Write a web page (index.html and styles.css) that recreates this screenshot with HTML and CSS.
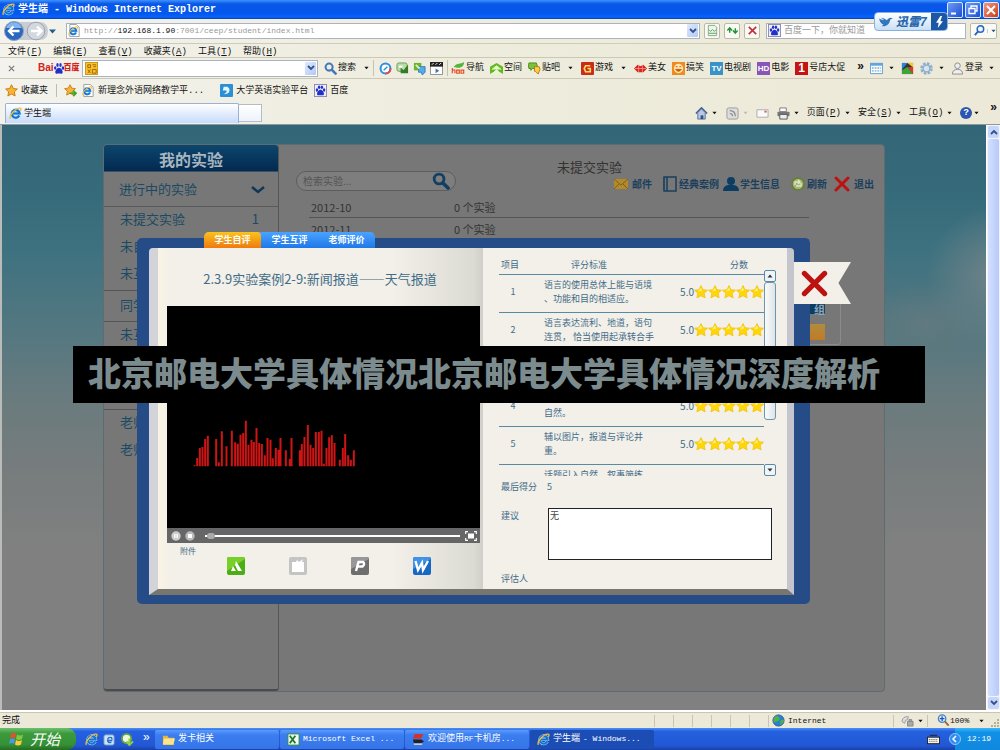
FILE: index.html
```html
<!DOCTYPE html>
<html lang="zh-CN">
<head>
<meta charset="utf-8">
<title>学生端</title>
<link rel="stylesheet" href="styles.css">
</head>
<body>
<svg class="defs" aria-hidden="true">
  <symbol id="ie" viewBox="0 0 14 14"><path d="M11 9.200A4.200 4.200 0 1 1 11.400 7H4.400" fill="none" stroke="#9fd2ff" stroke-width="3.400"/><path d="M11 9.200A4.200 4.200 0 1 1 11.400 7H4.400" fill="none" stroke="#1873cc" stroke-width="2.300"/><path d="M1.600 12.600C-.6 10 6.600 1.400 11.500 1.200c2-.1 1.500 1.700.7 3" fill="none" stroke="#f0bf3c" stroke-width="1.500"/></symbol>
  <symbol id="iepage" viewBox="0 0 14 14"><path d="M2 .5h7l3 3v10H2z" fill="#fff" stroke="#9a9a9a"/><use href="#ie" x="0" y="2" width="11" height="11"/></symbol>
  <symbol id="paw" viewBox="0 0 14 14"><rect x=".5" y=".5" width="13" height="13" fill="#eef" stroke="#88a"/><g fill="#2230c8"><ellipse cx="3.200" cy="6.500" rx="1.300" ry="1.800"/><ellipse cx="5.500" cy="3.500" rx="1.300" ry="1.900"/><ellipse cx="8.500" cy="3.500" rx="1.300" ry="1.900"/><ellipse cx="10.900" cy="6.500" rx="1.300" ry="1.800"/><path d="M7 6.300c2 0 4 3 3.700 4.700-.4 1.800-2 1-3.700 1s-3.300.8-3.700-1C3 9.300 5 6.300 7 6.300z"/></g></symbol>
  <symbol id="star" viewBox="0 0 14 14"><path d="M7 .6l2 4.100 4.500.5-3.300 3.100.9 4.600L7 10.700l-4.100 2.200.9-4.600L.5 5.200 5 4.700z" fill="#ffd60a" stroke="#f4be00" stroke-width=".7" stroke-linejoin="round"/><path d="M7 2.500l1 3-4 1z" fill="#fff27a"/></symbol>
  <symbol id="fav" viewBox="0 0 14 14"><path d="M7 .8l2 4 4.300.6-3.200 3 .8 4.500L7 10.800l-3.900 2.100.8-4.500-3.200-3L5 4.800z" fill="#f9b233" stroke="#c77a10"/></symbol>
  <symbol id="down" viewBox="0 0 6 4"><path d="M.5.500h5L3 3.500z" fill="currentColor"/></symbol>
  <symbol id="chev" viewBox="0 0 8 6"><path d="M1 1l3 3 3-3" fill="none" stroke="#31508c" stroke-width="1.800"/></symbol>
  <symbol id="lens" viewBox="0 0 14 14"><circle cx="5.500" cy="5.500" r="3.800" fill="none" stroke="currentColor" stroke-width="2.200"/><path d="M8.500 8.500l4 4" stroke="currentColor" stroke-width="2.800" stroke-linecap="round"/></symbol>
  <symbol id="cross" viewBox="0 0 24 24"><path d="M3 3l18 18M21 3L3 21" stroke="#bd1212" stroke-width="4.500" stroke-linecap="round"/></symbol>
</svg>

<header class="chrome">
  <div class="titlebar">
    <svg class="i12"><use href="#ie"/></svg>
    <h1 class="wintitle">学生端 <span class="latin">- Windows Internet Explorer</span></h1>
    <div class="winbtns">
      <button class="wb" aria-label="最小化"><svg viewBox="0 0 14 14"><path d="M3 10.500h5" stroke="#fff" stroke-width="2"/></svg></button>
      <button class="wb" aria-label="还原"><svg viewBox="0 0 14 14"><path d="M5 5V3h6v5H9M3 5.500h6v5H3z" fill="none" stroke="#fff" stroke-width="1.300"/></svg></button>
      <button class="wb wb-close" aria-label="关闭"><svg viewBox="0 0 14 14"><path d="M3 3l8 8M11 3l-8 8" stroke="#fff" stroke-width="2"/></svg></button>
    </div>
  </div>

  <div class="addressbar">
    <svg class="navbtns" viewBox="0 0 58 22">
      <path d="M12 2h24q9 0 9 9t-9 9H12z" fill="#c9cdd3"/>
      <circle cx="11" cy="11" r="9.500" fill="#2a68c0" stroke="#8fa3bd"/><path d="M3 8a8.500 8.500 0 0 1 16 0z" fill="#86b4ec"/>
      <path d="M16.500 11H6M10.500 6.500L6 11l4.500 4.500" fill="none" stroke="#fff" stroke-width="2.400"/>
      <circle cx="33" cy="11" r="8.800" fill="#d3d8de" stroke="#9aa5b1"/>
      <path d="M28 11h10M34 6.500L38.500 11 34 15.500" fill="none" stroke="#fff" stroke-width="2.400"/>
      <path d="M46 9.500h7L49.500 13.500z" fill="#1d5f8c"/>
    </svg>
    <div class="urlbox">
      <svg class="i12"><use href="#iepage"/></svg>
      <span class="url">http://<b>192.168.1.90</b>:7001/ceep/student/index.html</span>
      <button class="drop" aria-label="地址列表"><svg><use href="#chev"/></svg></button>
    </div>
    <button class="sq" aria-label="兼容性视图"><svg viewBox="0 0 14 14"><path d="M2.500 1.500h7l2 2v9h-9z" fill="#edf6e9" stroke="#84a884"/><path d="M3 6l2 2 2-2 2 2 2-2M3 10h8" fill="none" stroke="#5a9e62"/></svg></button>
    <button class="sq" aria-label="刷新"><svg viewBox="0 0 14 14"><path d="M4 9.500V5M1.500 7L4 4l2.500 3M10 4.500V9M7.500 7L10 10l2.500-3" fill="none" stroke="#219436" stroke-width="1.500"/></svg></button>
    <button class="sq" aria-label="停止"><svg viewBox="0 0 14 14"><path d="M3 3l8 8M11 3l-8 8" stroke="#c5303a" stroke-width="1.800"/></svg></button>
    <div class="findbox"><svg class="i12"><use href="#paw"/></svg><input class="find" aria-label="搜索" placeholder="百度一下，你就知道"></div>
    <button class="sq sq-find" aria-label="搜索"><svg viewBox="0 0 14 14"><circle cx="8" cy="5.500" r="3.500" fill="#eaf3ff" stroke="#2763bd" stroke-width="1.600"/><path d="M5.500 8L2 12" stroke="#2763bd" stroke-width="2"/></svg><svg class="car"><use href="#down"/></svg></button>
  </div>

  <nav class="menubar">
    <a href="#">文件(<u>F</u>)</a><a href="#">编辑(<u>E</u>)</a><a href="#">查看(<u>V</u>)</a><a href="#">收藏夹(<u>A</u>)</a><a href="#">工具(<u>T</u>)</a><a href="#">帮助(<u>H</u>)</a>
  </nav>

  <div class="baidubar">
    <svg class="bx" viewBox="0 0 8 8"><path d="M1 1l6 6M7 1L1 7" stroke="#777" stroke-width="1.300"/></svg>
    <div class="logo"><b>Bai</b><svg viewBox="2 1 10 12"><g fill="#2230c8"><ellipse cx="3.200" cy="6.500" rx="1.200" ry="1.800"/><ellipse cx="5.500" cy="3.500" rx="1.200" ry="1.900"/><ellipse cx="8.500" cy="3.500" rx="1.200" ry="1.900"/><ellipse cx="10.900" cy="6.500" rx="1.200" ry="1.800"/><path d="M7 6.300c2 0 4 3 3.700 4.700-.4 1.800-2 1-3.700 1s-3.300.8-3.700-1C3 9.300 5 6.300 7 6.300z"/></g></svg><b class="zh">百度</b></div>
    <div class="bbox">
      <svg class="i12" viewBox="0 0 14 14"><rect x=".5" y=".5" width="13" height="13" fill="#f7c428" stroke="#c99512"/><path d="M3 3h3v3H3zM8 3h4M9 5h3M3 8l3 4M6 8l-3 4M8 8h4v4H8z" fill="none" stroke="#a05e08"/></svg>
      <input class="bfind" aria-label="百度搜索">
      <button class="drop" aria-label="搜索记录"><svg><use href="#chev"/></svg></button>
    </div>
    <a class="tool t-search" href="#"><svg class="lens"><use href="#lens"/></svg>搜索</a>
    <svg class="car"><use href="#down"/></svg>
    <div class="group">
      <svg class="i12" viewBox="0 0 14 14"><circle cx="7" cy="7" r="5.300" fill="#fff" stroke="#2c8fe0" stroke-width="2.200"/><path d="M7 12.300A5.300 5.300 0 0 0 12.300 7" fill="none" stroke="#e84b3c" stroke-width="2.200"/><path d="M5 9l4-4" stroke="#2c8fe0" stroke-width="1.500"/></svg>
      <svg class="i12" viewBox="0 0 14 14"><rect x="1" y="1" width="11" height="9" rx="2" fill="#b9dca6" stroke="#6b9a52"/><path d="M5 6l3 3 5-6v9H5z" fill="#317c28"/><path d="M3 5h4" stroke="#fff" stroke-width="2"/></svg>
      <svg class="i12" viewBox="0 0 14 14"><path d="M1 1h8v8H1z" fill="#68b52f"/><path d="M6 5h7v6l-3 3-1-3H6z" fill="#5aaae8" stroke="#2f7cc0"/><path d="M3 3l4 4" stroke="#d7f2bd" stroke-width="2"/></svg>
      <svg class="i12" viewBox="0 0 14 14"><path d="M.5.500h13v13H.5z" fill="#fff" stroke="#888"/><path d="M0 0h14v5H0z" fill="#222"/><path d="M2 3l2-2M6 3l2-2M10 3l2-2" stroke="#fff"/><path d="M6 7l4 2.500L6 12z" fill="#4573b8"/></svg>
    </div>
    <div class="group links">
      <a class="tool" href="#"><svg class="i16" viewBox="0 0 16 16"><path d="M3 7C7 1 11 4 15 1c0 5-4 8-10 6z" fill="#53b53a"/><path d="M1.500 8v6M1.500 11q3-2 3 0v3M6.500 10.500h3v3.500h-3zM11.500 10.500h3v3.500h-3z" fill="none" stroke="#e4512a" stroke-width="1.400"/></svg>导航</a>
      <a class="tool" href="#"><svg class="i12" viewBox="0 0 14 14"><path d="M0 5l7-4 7 4v8l-3-2H3l-3 2z" fill="#63b91d"/><path d="M2 8l5-4 5 4M4 11l3-3 3 3v2H4z" fill="#e6f8cf" stroke="#e6f8cf"/></svg>空间</a>
      <a class="tool" href="#"><svg class="i12" viewBox="0 0 14 14"><path d="M1 1h8q2 3 0 6H5L3 9V7H1q-1-3 0-6z" fill="#7cc13b" stroke="#458c17"/><path d="M7 5h5q2 3 0 5l-1 3-3-3H7z" fill="#fbcf49" stroke="#b77812"/></svg>贴吧</a>
      <svg class="car"><use href="#down"/></svg>
      <a class="tool" href="#"><svg class="i12" viewBox="0 0 14 14"><rect width="14" height="14" rx="1" fill="#c92c17"/><path d="M10 4H5L3.500 7 5 10.500h5V7H7" fill="none" stroke="#ffdc66" stroke-width="1.800"/></svg>游戏</a>
      <svg class="car"><use href="#down"/></svg>
      <a class="tool" href="#"><svg class="i12" viewBox="0 0 14 14"><path d="M0 7l4-4 3 1.500L10 3l4 4-4 4H4z" fill="#d8201c"/><path d="M1 7h12M5 3v8M9 3v8" stroke="#f3a49c" stroke-width=".8"/></svg>美女</a>
      <a class="tool" href="#"><svg class="i12" viewBox="0 0 14 14"><rect width="14" height="14" fill="#f08a1e"/><circle cx="7" cy="7" r="5" fill="#ffe6b0"/><path d="M4 5h2M8 5h2M4 8q3 4 6 0z" fill="#c95b00" stroke="#c95b00"/></svg>搞笑</a>
      <a class="tool" href="#"><span class="badge tv">TV</span>电视剧</a>
      <a class="tool" href="#"><span class="badge hd">HD</span>电影</a>
      <a class="tool" href="#"><span class="badge one">1</span>号店大促</a>
    </div>
    <div class="bright">
      <span class="more">»</span>
      <svg class="i12" viewBox="0 0 14 14"><path d="M.5 1.500h13v11H.5z" fill="#fff" stroke="#5d9bcf"/><path d="M0 1h14v3H0z" fill="#62a5dc"/><path d="M2 6.500h10M2 9.500h10" stroke="#9cc4e4" stroke-width="2" stroke-dasharray="2 1"/></svg>
      <svg class="car"><use href="#down"/></svg>
      <svg class="i12" viewBox="0 0 14 14"><path d="M1 1h12v12H1z" fill="#333"/><path d="M1 1h6l-6 7z" fill="#2e85d8"/><path d="M7 1h6v5z" fill="#f3cc24"/><path d="M1 9l6-4 6 8H1z" fill="#3ba53b"/><path d="M7 6l6-1v8z" fill="#d63b28"/></svg>
      <svg class="i12" viewBox="0 0 14 14"><circle cx="7" cy="7" r="5" fill="none" stroke="#8fb0cc" stroke-width="3.500" stroke-dasharray="2.600 1.300"/><circle cx="7" cy="7" r="3.600" fill="#d5e4f0" stroke="#8fb0cc" stroke-width="1.500"/></svg>
      <svg class="car"><use href="#down"/></svg>
      <a class="tool" href="#"><svg class="i12" viewBox="0 0 14 14"><circle cx="7" cy="4" r="3" fill="#eee" stroke="#8a8a8a"/><path d="M1.500 13q0-5 5.500-5t5.500 5z" fill="#eee" stroke="#8a8a8a"/></svg>登录</a>
      <svg class="car"><use href="#down"/></svg>
    </div>
  </div>

  <div class="favbar">
    <a class="tool" href="#"><svg class="i12"><use href="#fav"/></svg>收藏夹</a>
    <a class="tool favadd" href="#" aria-label="添加"><svg class="i12" viewBox="0 0 14 14"><use href="#fav" width="13" height="13"/><path d="M6 10h7M10 7l3 3-3 3" fill="none" stroke="#3da52c" stroke-width="1.800"/></svg></a>
    <a class="tool" href="#"><svg class="i12"><use href="#iepage"/></svg>新理念外语网络教学平...</a>
    <a class="tool f3" href="#"><svg class="i12" viewBox="0 0 14 14"><rect width="14" height="14" rx="1" fill="#2b8fd6"/><path d="M4 3h4q3 2 2 5t-6 3q4-2 3-4H3" fill="#e4f5ff"/></svg>大学英语实验平台</a>
    <a class="tool" href="#"><svg class="i12"><use href="#paw"/></svg>百度</a>
  </div>

  <div class="tabbar">
    <button class="tab"><svg class="i12"><use href="#ie"/></svg>学生端</button>
    <button class="newtab" aria-label="新选项卡"></button>
    <div class="cmds">
      <svg class="i12" viewBox="0 0 14 14"><path d="M1 7l6-6 6 6" fill="none" stroke="#3c5c93" stroke-width="1.800"/><path d="M3 6l4-4 4 4v7H3z" fill="#b9c9e4" stroke="#5a6f96"/><path d="M6 9h3v4H6z" fill="#31508c"/></svg><svg class="car"><use href="#down"/></svg>
      <svg class="i12 rss" viewBox="0 0 14 14"><rect x="1" y="1" width="12" height="12" rx="2" fill="#ddd" stroke="#999"/><path d="M4 4q6 0 6 6M4 7q3 0 3 3" fill="none" stroke="#888" stroke-width="1.300"/></svg><svg class="car off"><use href="#down"/></svg>
      <svg class="i12" viewBox="0 0 14 14"><path d="M1 3h12v8H1z" fill="#fafafa" stroke="#aaa"/><path d="M9 4h2.500v2H9z" fill="#c66"/></svg>
      <svg class="i12 prn" viewBox="0 0 14 14"><path d="M3 1h7v4H3z" fill="#fff" stroke="#777"/><rect x=".5" y="5" width="13" height="5" rx="1" fill="#777"/><path d="M3 8h8v5H3z" fill="#eee" stroke="#555"/></svg><svg class="car"><use href="#down"/></svg>
      <a href="#">页面(<u>P</u>)</a><svg class="car"><use href="#down"/></svg>
      <a href="#">安全(<u>S</u>)</a><svg class="car"><use href="#down"/></svg>
      <a href="#">工具(<u>O</u>)</a><svg class="car"><use href="#down"/></svg>
      <span class="help">?</span><svg class="car"><use href="#down"/></svg>
      <span class="more up">»</span>
    </div>
  </div>
  <div class="thunder"><svg viewBox="0 0 16 14"><path d="M0 3q3 2 6 2l-4-3q4 0 7 3 1-2 4-3 1 0 3 1l-3 1q-1 7-7 8H3l2-2q-4-1-5-7z" fill="#3276c0"/></svg><b>迅雷7</b><span><svg viewBox="0 0 10 14"><path d="M6 0L1 8h3l-1 6 6-8H6l2-6z" fill="#fff"/></svg></span></div>
</header>

<main class="viewport">
  <div class="page">
    <div class="panel">
      <aside class="side">
        <h2>我的实验</h2>
        <div class="cat">进行中的实验<svg viewBox="0 0 14 9"><path d="M1 2l6 5 6-5" fill="none" stroke="#0e3656" stroke-width="2.400"/></svg></div>
        <ul>
          <li>未提交实验<span>1</span></li><li>未自</li><li>未互</li>
          <li class="head">同学</li>
          <li>未互</li><li></li>
          <li class="tail"></li><li>老师</li><li>老师</li>
        </ul>
      </aside>
      <section class="body">
        <div class="top">
          <form class="search"><input aria-label="检索实验" placeholder="检索实验..."><button type="button" aria-label="检索"><svg><use href="#lens"/></svg></button></form>
          <div class="right">
            <h3>未提交实验</h3>
            <nav class="acts">
              <a href="#" class="mail"><svg class="i16" viewBox="0 0 16 16"><path d="M1 3h14v10H1z" fill="#b28a2c"/><path d="M1 3l7 6 7-6M1 13l5-5M15 13l-5-5" fill="none" stroke="#806018"/></svg>邮件</a>
              <a href="#"><svg class="i16" viewBox="0 0 16 16"><path d="M2 1h12v14H2zM5 1v14" fill="none" stroke="#183f5e" stroke-width="1.500"/><path d="M1 3h2M1 6h2M1 9h2M1 12h2" stroke="#183f5e"/></svg>经典案例</a>
              <a href="#"><svg class="i16" viewBox="0 0 16 16"><circle cx="8" cy="5" r="4" fill="#0c3d63"/><path d="M0 15q0-5 5-6h6q5 1 5 6z" fill="#0c3d63"/></svg>学生信息</a>
              <a href="#" class="re"><svg class="i16" viewBox="0 0 16 16"><circle cx="8" cy="8" r="6" fill="#a5b27a" stroke="#63802c" stroke-width="1.500"/><path d="M5 9V6h5M11 7v3H6M8 4l2 2-2 2" fill="none" stroke="#dde6c5" stroke-width="1.400"/></svg>刷新</a>
              <a href="#" class="exit"><svg class="i16"><use href="#cross"/></svg>退出</a>
            </nav>
          </div>
        </div>
        <ul class="months"><li><span>2012-10</span>0 个实验</li><li><span>2012-11</span>0 个实验</li></ul>
      </section>
      <div class="mini"><b>组</b><i></i></div>
    </div>

    <section class="modal">
      <nav class="mtabs"><button class="on">学生自评</button><button>学生互评</button><button>老师评价</button></nav>
      <div class="book">
        <div class="left">
          <h2>2.3.9实验案例2-9:新闻报道——天气报道</h2>
          <div class="video">
            <svg class="wave" viewBox="231 60 936 330"><path stroke="#d01414" stroke-width="6" d="M312 205v-3M320 205v-25M328 205v-55M336 205v-58M344 205v-82M352 205v-92M377 205v-82M385 205v-12M394 205v-105M408 205v-60M424 205v-107M434 205v-72M442 205v-68M450 205v-95M458 205v-100M466 205v-137M474 205v-65M483 205v-80M490 205v-73M498 205v-115M506 205v-70M514 205v-67M523 205v-33M531 205v-85M540 205v-80M547 205v-24M556 205v-55M564 205v-50M570 205v-85M586 205v-48M598 205v-22M603 205v-85M628 205v-48M634 205v-67M642 205v-88M652 205v-124M660 205v-65M668 205v-55M676 205v-103M685 205v-103M693 205v-107M700 205v-8M708 205v-55M716 205v-87M724 205v-93M732 205v-70M748 205v-20M757 205v-55M764 205v-97M773 205v-33M781 205v-20M790 205v-48"/></svg>
            <div class="ctl">
              <button aria-label="暂停"><svg viewBox="0 0 10 10"><circle cx="5" cy="5" r="4.700" fill="#ccc"/><path d="M3.800 3v4M6.200 3v4" stroke="#fff" stroke-width="1.400"/></svg></button>
              <button aria-label="停止"><svg viewBox="0 0 10 10"><circle cx="5" cy="5" r="4.700" fill="#bbb"/><path d="M3 3h4v4H3z" fill="#fff"/></svg></button>
              <div class="track"><i></i></div>
              <button class="full" aria-label="全屏"><svg viewBox="0 0 12 10"><path d="M.7 3V.7H3M9 .7h2.300V3M11.300 7v2.300H9M3 9.300H.7V7" fill="none" stroke="#fff" stroke-width="1.200"/><path d="M3 2.500h6v5H3z" fill="#fff"/></svg></button>
            </div>
          </div>
          <p class="att">附件</p>
          <div class="files">
            <svg viewBox="0 0 18 18"><rect width="18" height="18" rx="2" fill="#4cae14"/><path d="M0 2q0-2 2-2h14q2 0 2 2L0 14z" fill="#79cf2a"/><path d="M9 4l6 10H11L8 8zM6 9l3 5H4z" fill="#fff"/></svg>
            <svg viewBox="0 0 18 18"><rect width="18" height="18" rx="2" fill="#c4c4c4"/><path d="M3 5h4l1-2 2 2 4-3-1 3h2v10H3z" fill="#fff"/></svg>
            <svg viewBox="0 0 18 18"><rect width="18" height="18" rx="2" fill="#6e6e6e"/><path d="M0 2q0-2 2-2h14q2 0 2 2L0 12z" fill="#979797"/><path d="M5 14L7.500 5h4.500q2.500 2-.5 4.500H7" fill="none" stroke="#fff" stroke-width="2.400"/></svg>
            <svg viewBox="0 0 18 18"><rect width="18" height="18" rx="2" fill="#1767c4"/><path d="M0 2q0-2 2-2h14q2 0 2 2L0 12z" fill="#3f92e6"/><path d="M2.500 4L5 13l4-7 1 7 5-9" fill="none" stroke="#fff" stroke-width="2.400"/></svg>
          </div>
        </div>
        <div class="rightp">
          <div class="scores">
            <div class="clip">
            <table>
              <thead><tr><th class="c1">项目</th><th class="c2">评分标准</th><th class="c3">分数</th></tr></thead>
              <tbody>
                <tr><td class="c1">1</td><td class="c2">语言的使用总体上能与语境<br>、功能和目的相适应。</td><td class="c3"><div>5.0 <svg><use href="#star"/></svg><svg><use href="#star"/></svg><svg><use href="#star"/></svg><svg><use href="#star"/></svg><svg><use href="#star"/></svg></div></td></tr>
                <tr><td class="c1">2</td><td class="c2">语言表达流利、地道，语句<br>连贯， 恰当使用起承转合手</td><td class="c3"><div>5.0 <svg><use href="#star"/></svg><svg><use href="#star"/></svg><svg><use href="#star"/></svg><svg><use href="#star"/></svg><svg><use href="#star"/></svg></div></td></tr>
                <tr><td class="c1"></td><td class="c2"></td><td class="c3"></td></tr>
                <tr><td class="c1">4</td><td class="c2">&nbsp;<br>自然。</td><td class="c3"><div>5.0 <svg><use href="#star"/></svg><svg><use href="#star"/></svg><svg><use href="#star"/></svg><svg><use href="#star"/></svg><svg><use href="#star"/></svg></div></td></tr>
                <tr><td class="c1">5</td><td class="c2">辅以图片，报道与评论并<br>重。</td><td class="c3"><div>5.0 <svg><use href="#star"/></svg><svg><use href="#star"/></svg><svg><use href="#star"/></svg><svg><use href="#star"/></svg><svg><use href="#star"/></svg></div></td></tr>
                <tr><td class="c1"></td><td class="c2">话题引入自然，叙事简练<br>&nbsp;</td><td class="c3"></td></tr>
              </tbody>
            </table>
            </div>
            <div class="sbar"><button aria-label="向上"><svg class="flip"><use href="#down"/></svg></button><i></i><button class="dn" aria-label="向下"><svg><use href="#down"/></svg></button></div>
          </div>
          <p class="final">最后得分 <span>5</span></p>
          <div class="advice"><label for="adv">建议</label><textarea id="adv">无</textarea></div>
          <p class="by">评估人</p>
        </div>
      </div>
      <button class="flag" aria-label="关闭"><svg><use href="#cross"/></svg></button>
    </section>
    <div class="banner">北京邮电大学具体情况北京邮电大学具体情况深度解析</div>
  </div>
  <div class="vscroll"><button aria-label="向上滚动"><svg class="flip"><use href="#chev"/></svg></button><i></i><button aria-label="向下滚动"><svg><use href="#chev"/></svg></button></div>
</main>

<footer>
  <div class="status">
    <span class="done">完成</span>
    <i></i><i></i><i></i><i></i><i></i><i></i>
    <div class="zone"><svg class="i12" viewBox="0 0 14 14"><circle cx="7" cy="7" r="6" fill="#2a7fd0" stroke="#2a5a90"/><path d="M3 3q4-2 5 1T5 8 3 11Q0 7 3 3zM9 7l4-1q0 4-4 6z" fill="#4fb24a"/></svg>Internet</div>
    <div class="prot"><svg class="i12" viewBox="0 0 14 14"><path d="M1 8q1-6 7-5l-1 3q-3 0-3 4z" fill="#ddd" stroke="#999"/><path d="M7 8h6v5H7zM8.500 8V6h3v2" fill="#aaa" stroke="#888"/></svg><svg class="car"><use href="#down"/></svg></div>
    <div class="zoom"><svg class="i12" viewBox="0 0 14 14"><circle cx="5.500" cy="5" r="4" fill="#d9ebff" stroke="#4a7fc4" stroke-width="1.400"/><path d="M3 5h5M5.500 2.500v5" stroke="#2058b0" stroke-width="1.400"/><path d="M8.500 8l4 4.500" stroke="#9a6a30" stroke-width="2"/></svg>100%<svg class="car"><use href="#down"/></svg></div>
    <svg class="grip" viewBox="0 0 9 9"><path d="M7 1h2M4 4h2M7 4h2M1 7h2M4 7h2M7 7h2" stroke="#b5b09a" stroke-width="2"/></svg>
  </div>
  <div class="taskbar">
    <button class="start"><svg viewBox="0 0 16 14"><path d="M2 2q3-2 5 0L6 6.500q-2-2-5 0z" fill="#e8502c"/><path d="M8 2.500q3 2 6 0L13 7q-3 2-6 0z" fill="#83c640"/><path d="M1 7.500q3-2 5 0L5 12q-2-2-5 0z" fill="#4c94ee"/><path d="M7 8q3 2 6 0l-1 4.500q-3 2-6 0z" fill="#f9cc3a"/></svg>开始</button>
    <div class="quick">
      <svg class="i12"><use href="#ie"/></svg>
      <svg class="i12" viewBox="0 0 14 14"><rect x="1" y="2" width="11" height="11" rx="2" fill="#cfe3f8" stroke="#6b93c4"/><path d="M10 8H5q0 3 4 2M5 7q1-3 4-2l1 2" fill="none" stroke="#256fc4" stroke-width="1.500"/></svg>
      <svg class="i12" viewBox="0 0 14 14"><circle cx="6" cy="6" r="5" fill="#eef6dd" stroke="#5fa43c" stroke-width="2"/><path d="M9 6v6M6 9l3 4 4-4" fill="none" stroke="#8ed048" stroke-width="2"/></svg>
      <span>»</span>
    </div>
    <button class="task"><svg class="i12" viewBox="0 0 14 14"><path d="M1 3h5l1 2h6v8H1z" fill="#e8b53a"/><path d="M2 6h12l-2 6.500H1z" fill="#ffe48a"/></svg>发卡相关</button>
    <button class="task"><svg class="i12" viewBox="0 0 14 14"><path d="M1 1h12v12H1z" fill="#f2fbf2" stroke="#2e8a3c"/><path d="M3 3l6 8M9 3l-6 8" stroke="#1e7a30" stroke-width="2"/></svg><span class="m">Microsoft Excel ...</span></button>
    <button class="task"><svg class="i12" viewBox="0 0 14 14"><path d="M3 1h9l-2 5H1z" fill="#d4332a"/><path d="M1 7h9l3 2-3 2H2z" fill="#222"/><path d="M2 12h9" stroke="#ddd" stroke-width="1.500"/></svg><span>欢迎使用<span class="m">RF</span>卡机房<span class="m">...</span></span></button>
    <button class="task cur"><svg class="i12"><use href="#ie"/></svg>学生端<span class="m">- Windows...</span></button>
    <svg class="kbd i12" viewBox="0 0 14 14"><rect x=".5" y="4.500" width="13" height="7" fill="#f5f2e4" stroke="#222"/><path d="M2 7h10M2 9h10" stroke="#555" stroke-dasharray="1 1"/><path d="M3 2.500h8" stroke="#222"/></svg>
    <div class="tray"><button aria-label="展开"><svg viewBox="0 0 8 8"><path d="M5 1L2 4l3 3" fill="none" stroke="#fff" stroke-width="1.500"/></svg></button><span class="m">12:19</span></div>
  </div>
</footer>
</body>
</html>
```
FILE: styles.css
```css
* { box-sizing: border-box; }
body { margin: 0; min-height: 100vh; display: flex; flex-direction: column; overflow: hidden; background: #eeecdc; color: #111; font: 9px/12px "Liberation Mono", "Noto Sans CJK SC", monospace; }
button { padding: 0; margin: 0; border: 0; background: none; color: inherit; font: inherit; display: flex; align-items: center; justify-content: center; }
input, textarea { font: inherit; border: 0; padding: 0; margin: 0; background: none; min-width: 0; outline: 0; }
a { color: inherit; text-decoration: none; }
h1, h2, h3, p, ul { margin: 0; padding: 0; font-weight: normal; list-style: none; }
svg { display: block; flex: none; }
i { display: block; }
.defs { position: absolute; width: 0; height: 0; }
.i12 { width: 13px; height: 13px; }
.i16 { width: 16px; height: 16px; }
.car { width: 5px; height: 4px; }
.off { color: #bbb; }
.m { font: 8px/12px "Liberation Mono", monospace; white-space: pre; }

/* Window frame */
.chrome { position: relative; background: linear-gradient(90deg, #f3f2ec, #eeecdc 50%, #ece9d8); }
.titlebar { height: 19px; display: flex; align-items: center; gap: 3px; padding: 0 1px 0 2px; color: #fff; background: linear-gradient(#3d93ff, #0a57e6 20%, #0457ee 70%, #0a63fb 90%, #0340b8); }
.wintitle { flex: 1; font-size: 10px; font-weight: bold; }
.latin { font-size: 10px; }
.winbtns { display: flex; gap: 2px; }
.wb { width: 16px; height: 16px; border: 1px solid #dce8ff; border-radius: 2px; background: linear-gradient(135deg, #6d9bf5, #1b4fd0); }
.wb-close { background: linear-gradient(135deg, #f19a80, #cc3a16); }
.wb svg { width: 14px; height: 14px; }
.addressbar { height: 25px; display: flex; align-items: center; gap: 4px; padding: 0 3px 1px 3px; border-bottom: 1px solid #cfcbb8; }
.navbtns { width: 58px; height: 22px; }
.urlbox, .findbox, .bbox { display: flex; align-items: center; border: 1px solid #aab3c2; background: #fff; height: 16px; }
.urlbox { flex: 1; gap: 3px; padding-left: 1px; margin-left: 1px; }
.url { flex: 1; font-size: 8px; color: #999; }
.url b { font-weight: normal; color: #111; }
.drop { width: 11px; height: 13px; margin-right: 1px; border-radius: 1px; background: linear-gradient(135deg, #dfe9ff, #b3c9f3); }
.drop svg { width: 8px; height: 6px; }
.sq { width: 16px; height: 16px; border: 1px solid #bbb9ab; border-radius: 2px; background: #fafaf5; }
.sq svg { width: 13px; height: 13px; }
.findbox { width: 200px; padding-left: 1px; gap: 3px; margin-left: 2px; }
.find { flex: 1; }
.find::placeholder { color: #999; opacity: 1; }
.sq-find { width: 27px; color: #31508c; }
.sq-find svg { width: 15px; }
.sq-find svg.car { width: 9px; height: 4px; padding-left: 3px; border-left: 1px solid #ccc; }
.menubar { height: 13px; display: flex; align-items: center; gap: 11px; padding-left: 8px; padding-top: 2px; }
.menubar a { white-space: nowrap; }
.baidubar { height: 22px; display: flex; align-items: center; padding: 0 5px 0 8px; border-top: 1px solid #cbc8b5; border-bottom: 1px solid #cbc8b5; white-space: nowrap; }
.bx { width: 7px; height: 7px; margin-right: 23px; }
.logo { display: flex; align-items: center; width: 42px; color: #d3241c; font: bold 10px/12px "Liberation Sans", "Noto Sans CJK SC", sans-serif; }
.logo svg { width: 10px; height: 13px; }
.logo .zh { font-size: 8px; font-weight: 900; }
.bbox { width: 236px; height: 17px; margin-left: 2px; padding-left: 2px; }
.bfind { flex: 1; }
.tool { display: flex; align-items: center; gap: 1px; }
.t-search { margin: 0 8px 0 6px; gap: 1px; }
.lens { width: 13px; height: 13px; color: #4478b8; }
.group { display: flex; gap: 4px; margin-left: 4px; padding-left: 5px; border-left: 1px solid #c5c2b2; height: 16px; align-items: center; }
.links { gap: 6px; padding-left: 3px; }
.links .i16 { width: 14px; }
.links .car { margin: 0 2px; }
.badge { width: 13px; height: 13px; color: #fff; font: bold 8px/13px "Liberation Sans", sans-serif; text-align: center; }
.tv { background: #3a93c8; }
.hd { background: #8955b8; }
.one { background: #c41414; font-size: 12px; }
.bright { margin-left: auto; display: flex; align-items: center; gap: 6px; }
.bright .car { margin-right: 1px; }
.more { font: bold 12px/12px "Liberation Sans", sans-serif; align-self: flex-start; }
.bright .more { line-height: 8px; }
.favbar { height: 23px; display: flex; align-items: center; padding-left: 5px; white-space: nowrap; }
.favbar .tool { gap: 3px; margin-right: 8px; }
.favbar .favadd { padding-left: 7px; border-left: 1px solid #bbb; margin-right: 5px; }
.favbar .f3 { margin-left: 8px; margin-right: 6px; }
.tabbar { height: 22px; display: flex; align-items: center; padding: 0 3px 0 5px; white-space: nowrap; }
.tab { width: 234px; height: 20px; justify-content: flex-start; gap: 2px; padding-left: 3px; border: 1px solid #9db0d0; border-bottom: 0; border-radius: 2px 2px 0 0; background: linear-gradient(#fff, #c7dbfb); }
.newtab { width: 23px; height: 18px; border: 1px solid #b4bccb; border-left: 0; background: linear-gradient(#fff, #eef3fb); }
.cmds { margin-left: auto; height: 20px; display: flex; align-items: center; gap: 2px; }
.cmds .car { margin: 0 6px 0 2px; }
.cmds .rss { margin-left: 1px; }
.cmds .prn { margin-left: 6px; }
.cmds .help + .car { margin-left: 0; margin-right: 9px; }
.help { width: 12px; height: 12px; border-radius: 50%; background: #2b57b0; color: #fff; font-weight: bold; text-align: center; }
.cmds .up { line-height: 8px; }
.thunder { position: absolute; right: 52px; top: 12px; width: 74px; height: 19px; display: flex; align-items: center; gap: 3px; padding-left: 4px; border: 1px solid #86b1df; border-radius: 4px; background: linear-gradient(#fff, #c9dff5); color: #2a68ad; font: bold 12px/16px "Liberation Sans", "Noto Sans CJK SC", sans-serif; overflow: hidden; white-space: nowrap; }
.thunder b { font-style: italic; font-size: 12px; }
.thunder > svg { width: 14px; height: 12px; }
.thunder span { margin-left: auto; width: 16px; align-self: stretch; display: flex; align-items: center; justify-content: center; background: #1b57a5; }
.thunder span svg { width: 9px; height: 12px; }

/* Web page */
.viewport { flex: 1; display: flex; border-top: 1px solid #8b9aa0; border-bottom: 2px solid #fff; min-height: 0; }
.page { position: relative; flex: 1; display: flex; padding: 19px 101px 18px 101px; border-left: 2px solid #b9bcb8; font-family: "Noto Sans CJK SC", sans-serif;
  background: radial-gradient(ellipse 70px 70px at 101% 26%, #6b8187 10%, transparent), radial-gradient(ellipse 70px 40px at 94% 34%, #61797f, transparent), linear-gradient(#336677, #366b7b 12%, #3f7280 22%, #557880 36%, #6a7b7e 47%, #767c7d 58%, #808080 72%); }
.panel { position: relative; flex: 1; display: flex; background: #777; border: 1px solid #5c6c70; border-radius: 4px; }
.side { width: 175px; border-right: 1px solid #555; border-bottom: 2px solid #4b4b4b; border-radius: 3px; color: #1b4a63; font-size: 13px; line-height: 18px; }
.side h2 { height: 27px; color: #a9b6c0; font-size: 16px; font-weight: bold; line-height: 29px; text-align: center; background: linear-gradient(#0c466d, #03294f); border-radius: 3px 3px 0 0; border-bottom: 1px solid #37506a; }
.cat { height: 35px; display: flex; align-items: center; justify-content: space-between; padding: 0 13px 0 15px; border-bottom: 1px solid #5a5a5a; }
.cat svg { width: 14px; height: 9px; }
.side li { height: 27px; display: flex; align-items: center; justify-content: space-between; padding: 0 19px 3px 16px; }
.side .head { height: 32px; margin-top: 2px; border-top: 1px solid #555; border-bottom: 1px solid #555; }
.side .tail { height: 34px; border-bottom: 1px solid #555; }
.body { flex: 1; color: #333; font-size: 11px; line-height: 16px; }
.top { display: flex; justify-content: space-between; align-items: flex-start; padding: 13px 10px 0 17px; }
.search { display: flex; align-items: center; width: 160px; height: 20px; margin-top: 13px; padding: 0 5px 0 6px; border: 1px solid #5d5d5d; border-radius: 10px; background: #7e7e7e; }
.search input { flex: 1; font-size: 10px; }
.search input::placeholder { color: #555; opacity: 1; }
.search svg { width: 18px; height: 18px; color: #123f62; }
.right h3 { font-size: 13px; line-height: 18px; width: 317px; }
.acts { display: flex; justify-content: flex-end; align-items: center; gap: 10px; color: #1b3f5c; font-size: 10px; font-weight: bold; }
.acts a { display: flex; align-items: center; gap: 1px; }
.acts .mail { gap: 3px; }
.acts a:nth-child(3) { margin-left: -6px; }
.acts .exit { gap: 4px; margin-left: -3px; }
.months { padding: 4px 75px 0 30px; }
.months li { display: flex; height: 22px; align-items: center; border-bottom: 1px solid #555; padding-left: 2px; }
.months span { width: 143px; }
.mini { position: absolute; right: 43px; top: 156px; width: 42px; height: 44px; border: 1px solid #8b8b8b; border-radius: 3px; padding: 2px 15px 0 0; text-align: right; }
.mini b { display: block; background: #0c3d63; color: #8fa4b5; font-size: 11px; line-height: 10px; }
.mini i { height: 16px; margin-top: 10px; background: linear-gradient(#b08c3c, #c07a28); }

/* Evaluation book */
.modal { position: absolute; left: 135px; top: 113px; width: 673px; height: 366px; padding: 10px 16px 9px 12px; background: #264c87; border-radius: 5px; color: #3f6d88; }
.mtabs { position: absolute; left: 67px; top: -6px; height: 16px; display: flex; border-radius: 5px 5px 0 0; overflow: hidden; background: linear-gradient(#4aa3ff, #1f78e8); color: #fff; font-weight: bold; }
.mtabs button { width: 57px; }
.mtabs .on { background: linear-gradient(#fbc31c, #ef7a10); border-radius: 0 4px 0 0; }
.book { height: 100%; display: flex; border-radius: 4px 4px 0 0; border-style: solid; border-width: 0 7px 6px 9px; border-color: #777 #c5c6cd #77776f #d3d4da; background: #f3efe9; }
.left { width: 325px; padding: 0 3px 0 9px; background: linear-gradient(90deg, #f8f4e4, #f3efe9 4%, #f3efe9 72%, #dbdbd3 97%, #cfcec8); }
.left h2 { padding-top: 20px; height: 58px; font-size: 13px; line-height: 22px; text-align: center; padding-right: 7px; }
.video { height: 237px; display: flex; flex-direction: column; background: #000; }
.wave { width: 100%; height: 110px; margin-top: 112px; }
.ctl { height: 15px; display: flex; align-items: center; gap: 4px; padding: 0 3px 0 4px; background: #666; }
.ctl button { width: 10px; height: 10px; }
.ctl .full { width: 12px; margin-left: 1px; }
.track { flex: 1; height: 2px; margin-left: 6px; background: #fff; display: flex; align-items: center; }
.track i { width: 8px; height: 6px; border-radius: 3px; margin-left: 2px; background: #aaa; flex: none; }
.att { padding: 2px 0 0 13px; font-size: 8px; }
.files { display: flex; gap: 44px; padding: 0 0 0 60px; }
.files svg { width: 18px; height: 18px; }
.rightp { flex: 1; padding: 6px 11px 0 16px; font-size: 9px; }
.scores { display: flex; height: 222px; }
.clip { flex: 1; overflow: hidden; }
table { width: 100%; border-collapse: collapse; table-layout: fixed; line-height: 14px; }
th { height: 20px; padding: 2px 0 0; font-weight: normal; border-bottom: 1px solid #5a8aa2; white-space: nowrap; }
td { height: 38px; padding: 0 0 3px; border-bottom: 1px solid #5a8aa2; }
th.c1 { text-align: left; padding-left: 2px; }
.c1 { width: 28px; text-align: center; }
.c2 { padding-left: 17px; text-align: left; white-space: nowrap; }
th.c2 { padding-left: 44px; }
.c3 { width: 86px; }
th.c3 { padding-left: 36px; }
.c3 div { display: flex; align-items: center; font-size: 10px; justify-content: flex-end; }
.c3 svg { width: 14px; height: 14px; }
.sbar { width: 12px; margin-top: 16px; display: flex; flex-direction: column; color: #333; }
.sbar button { width: 12px; height: 12px; border: 1px solid #5a8aa2; border-radius: 2px; background: #eef4f8; }
.sbar svg { width: 6px; height: 4px; }
.sbar i { height: 138px; border: 1px solid #6f95a8; border-radius: 3px; background: linear-gradient(90deg, #fafafa, #dfe4e8); }
.sbar .dn { margin-top: auto; }
.flip { rotate: 180deg; }
.final { padding: 5px 0 0 2px; }
.final span { margin-left: 8px; }
.advice { display: flex; margin-top: 15px; padding-left: 2px; }
.advice label { width: 47px; padding-top: 2px; }
.advice textarea { flex: 1; height: 52px; margin-right: 4px; padding: 1px; border: 1px solid #222; background: #fff; color: #444; resize: none; }
.by { padding: 13px 0 0 2px; }
.flag { position: absolute; right: -41px; top: 24px; width: 57px; height: 42px; padding-right: 16px; background: #f3efe9; clip-path: polygon(0 0, 100% 0, 78% 50%, 100% 100%, 0 100%); }
.flag svg { width: 27px; height: 27px; }
.banner { position: absolute; left: 71px; right: 61px; top: 221px; height: 57px; padding-left: 15px; background: #000; color: #7c8b8e; font-size: 33px; font-weight: 900; line-height: 52px; white-space: nowrap; }
.vscroll { width: 14px; display: flex; flex-direction: column; padding: 1px; background: #f4f4f8; border-left: 1px solid #fff; }
.vscroll button { height: 12px; border-radius: 2px; background: #c6d6fb; }
.vscroll svg { width: 8px; height: 6px; }
.vscroll i { flex: 1; margin: 1px 0; border-radius: 2px; background: linear-gradient(90deg, #d3dffd, #b6cafa); }

/* Status bar and taskbar */
.status { height: 16px; display: flex; align-items: center; padding: 0 1px 0 2px; border-top: 1px solid #c9c5b0; background: #ece9d8; }
.done { flex: 1; }
.status > i { width: 19px; height: 12px; border-left: 1px solid #c9c5b0; }
.zone, .prot, .zoom { display: flex; align-items: center; gap: 3px; height: 12px; padding-left: 3px; border-left: 1px solid #c9c5b0; font-size: 8px; }
.zone { width: 125px; }
.prot { width: 34px; padding-left: 7px; gap: 4px; }
.zoom { padding-left: 9px; gap: 0; width: 57px; }
.zoom .car { margin-left: auto; }
.grip { width: 9px; height: 9px; margin-left: 6px; align-self: flex-end; }
.taskbar { height: 22px; display: flex; align-items: center; background: linear-gradient(#4a90f5, #2561df 15%, #2257d5 80%, #1941a5); color: #fff; }
.start { width: 76px; height: 22px; gap: 5px; padding-right: 7px; border-radius: 0 9px 9px 0; background: linear-gradient(#6cc06c, #3c9a3c 25%, #359135 75%, #236d23); font: italic 15px/20px "Noto Sans CJK SC", sans-serif; }
.start svg { width: 16px; height: 14px; }
.quick { width: 79px; display: flex; align-items: center; gap: 5px; padding-left: 9px; font-size: 12px; }
.quick span { margin-left: 4px; align-self: flex-start; line-height: 8px; font-family: "Liberation Sans", sans-serif; }
.task { flex: 0 1 124px; height: 19px; justify-content: flex-start; gap: 3px; margin-right: 1px; padding-left: 7px; border-radius: 2px; background: linear-gradient(#5d9bfb, #3b7ef0 25%, #3574e6); white-space: nowrap; }
.cur { background: #1b4db5; }
.kbd { margin-left: auto; margin-right: 15px; }
.tray { width: 45px; height: 22px; display: flex; align-items: center; justify-content: space-between; padding-right: 9px; background: linear-gradient(#3bb8f5, #1290e8 20%, #1088dd); }
.tray button { width: 12px; height: 12px; margin-left: -6px; border-radius: 50%; background: #2f8df0; border: 1px solid #8cc8fa; }
.tray svg { width: 8px; height: 8px; }
```
